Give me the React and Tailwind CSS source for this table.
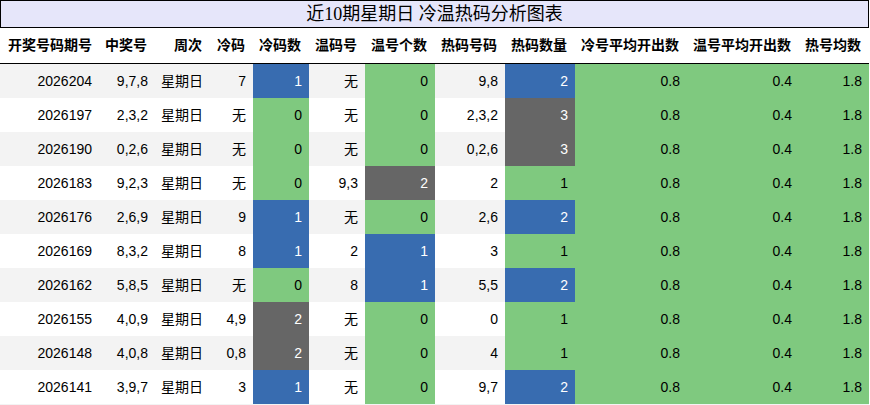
const G = "bg-[#7fc97f] text-black";
const B = "bg-[#386cb0] text-white";
const D = "bg-[#666666] text-white";

const headers = ["开奖号码期号", "中奖号", "周次", "冷码", "冷码数", "温码号", "温号个数", "热码号码", "热码数量", "冷号平均开出数", "温号平均开出数", "热号均数"];

// [期号, 中奖号, 冷码, 冷码数, 冷色, 温码号, 温号个数, 温色, 热码, 热码数量, 热色]
const rows = [
  ["2026204", "9,7,8", "7", "1", B, "无", "0", G, "9,8", "2", B],
  ["2026197", "2,3,2", "无", "0", G, "无", "0", G, "2,3,2", "3", D],
  ["2026190", "0,2,6", "无", "0", G, "无", "0", G, "0,2,6", "3", D],
  ["2026183", "9,2,3", "无", "0", G, "9,3", "2", D, "2", "1", G],
  ["2026176", "2,6,9", "9", "1", B, "无", "0", G, "2,6", "2", B],
  ["2026169", "8,3,2", "8", "1", B, "2", "1", B, "3", "1", G],
  ["2026162", "5,8,5", "无", "0", G, "8", "1", B, "5,5", "2", B],
  ["2026155", "4,0,9", "4,9", "2", D, "无", "0", G, "0", "1", G],
  ["2026148", "4,0,8", "0,8", "2", D, "无", "0", G, "4", "1", G],
  ["2026141", "3,9,7", "3", "1", B, "无", "0", G, "9,7", "2", B],
];

const cols = "grid grid-cols-[100px_55px_55px_43px_56px_56px_70px_70px_70px_112px_112px_70px]";

const Cell = ({ children, className = "" }) => (
  <div className={`flex items-center justify-end pr-[7px] whitespace-nowrap ${className}`}>{children}</div>
);

export default function App() {
  return (
    <div className="w-[869px] bg-white text-black text-[14px] font-['Liberation_Sans','Noto_Sans_CJK_SC',sans-serif]">
      <div className="h-[28px] border border-black bg-[#e6e6fa] flex items-center justify-center text-[18px] font-['Liberation_Serif','Noto_Sans_CJK_SC',serif]">
        近10期星期日 冷温热码分析图表
      </div>
      <div className={`${cols} h-[36px] pb-[1px] border-b border-black font-bold`}>
        {headers.map((h) => (
          <Cell key={h} className="pr-[8px]">{h}</Cell>
        ))}
      </div>
      {rows.map((r, i) => (
        <div key={r[0]} className={`${cols} h-[34px] ${i % 2 === 0 ? "bg-[#f3f3f3]" : "bg-white"}`}>
          <Cell className="pr-[8px]">{r[0]}</Cell>
          <Cell>{r[1]}</Cell>
          <Cell>星期日</Cell>
          <Cell>{r[2]}</Cell>
          <Cell className={r[4]}>{r[3]}</Cell>
          <Cell>{r[5]}</Cell>
          <Cell className={r[7]}>{r[6]}</Cell>
          <Cell>{r[8]}</Cell>
          <Cell className={r[10]}>{r[9]}</Cell>
          <Cell className={G}>0.8</Cell>
          <Cell className={G}>0.4</Cell>
          <Cell className={G}>1.8</Cell>
        </div>
      ))}
      <div className="h-[10px] bg-[#f3f3f3]" />
    </div>
  );
}
